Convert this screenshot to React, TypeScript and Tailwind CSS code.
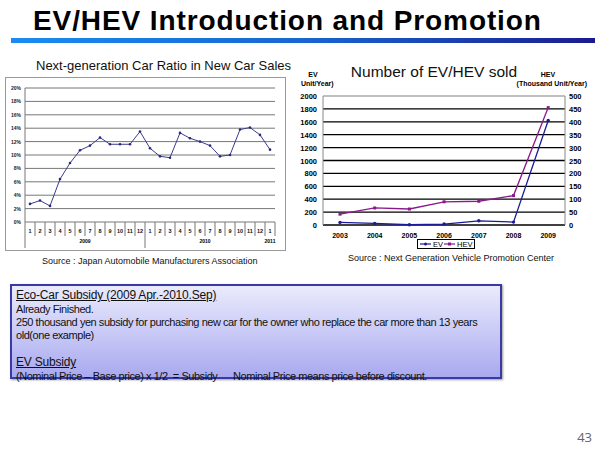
import React from "react";

const ratio = [2.7,3.2,2.4,6.4,8.8,10.7,11.4,12.6,11.6,11.6,11.6,13.5,11.0,9.8,9.6,13.3,12.5,12.0,11.4,9.8,10.0,13.8,14.1,13.0,10.8];
const months = [1,2,3,4,5,6,7,8,9,10,11,12,1,2,3,4,5,6,7,8,9,10,11,12,1];
const ev = [40,25,5,15,65,45,1620];
const hev = [42,66,62,90,92,114,455];
const years = [2003,2004,2005,2006,2007,2008,2009];

function LeftChart() {
  const y = (v: number) => 224 - (v / 20) * 134;
  const x = (i: number) => 30 + i * 10;
  const pts = ratio.map((v, i) => `${x(i)},${y(v)}`).join(" ");
  return (
    <svg width="290" height="180" viewBox="0 76 290 180" className="block">
      <rect x="5.5" y="79.5" width="280" height="173" fill="white" stroke="#999" />
      {Array.from({ length: 11 }, (_, k) => (
        <g key={k}>
          <line x1="25" x2="275" y1={y(k * 2)} y2={y(k * 2)} stroke="#777" strokeWidth="1" />
          <text x="21" y={y(k * 2) + 2} fontSize="5" fontWeight="bold" textAnchor="end" fill="#222">{k * 2}%</text>
        </g>
      ))}
      <line x1="25" x2="25" y1="90" y2="250" stroke="#777" />
      {months.map((m, i) => (
        <g key={i}>
          <line x1={25 + (i + 1) * 10} x2={25 + (i + 1) * 10} y1="224" y2={i === 11 ? 250 : 238} stroke="#777" />
          <text x={x(i)} y="235" fontSize="5.5" fontWeight="bold" textAnchor="middle" fill="#111">{m}</text>
        </g>
      ))}
      <text x="85" y="244.5" fontSize="5" fontWeight="bold" textAnchor="middle">2009</text>
      <text x="205" y="244.5" fontSize="5" fontWeight="bold" textAnchor="middle">2010</text>
      <text x="270" y="244.5" fontSize="5" fontWeight="bold" textAnchor="middle">2011</text>
      <polyline points={pts} fill="none" stroke="#3c3c8c" strokeWidth="1" />
      {ratio.map((v, i) => <circle key={i} cx={x(i)} cy={y(v)} r="1.3" fill="#2a2a7a" />)}
    </svg>
  );
}

function RightChart() {
  const y = (v: number) => 227 - (v / 2000) * 129;
  const x = (i: number) => 340 + i * 34.7;
  const evPts = ev.map((v, i) => `${x(i)},${y(v)}`).join(" ");
  const hevPts = hev.map((v, i) => `${x(i)},${y(v * 4)}`).join(" ");
  return (
    <svg width="300" height="194" viewBox="300 60 300 194" className="block">
      <text x="434" y="79" fontSize="15.5" textAnchor="middle" fill="#111">Number of EV/HEV sold</text>
      <text x="313" y="79" fontSize="7" fontWeight="bold" textAnchor="middle">EV</text>
      <text x="301" y="88" fontSize="7" fontWeight="bold">Unit/Year)</text>
      <text x="548" y="79" fontSize="7" fontWeight="bold" textAnchor="middle">HEV</text>
      <text x="587" y="88" fontSize="7" fontWeight="bold" textAnchor="end">(Thousand Unit/Year)</text>
      {Array.from({ length: 11 }, (_, k) => (
        <g key={k}>
          <line x1="323" x2="565" y1={y(k * 200)} y2={y(k * 200)} stroke={k === 10 ? "#aaa" : "#000"} strokeWidth="1.3" />
          <text x="317" y={y(k * 200) + 3} fontSize="7.5" fontWeight="bold" textAnchor="end">{k * 200}</text>
          <text x="569" y={y(k * 200) + 3} fontSize="7.5" fontWeight="bold">{k * 50}</text>
        </g>
      ))}
      <line x1="323" x2="323" y1="98" y2="227" stroke="#888" />
      <line x1="565" x2="565" y1="98" y2="227" stroke="#888" />
      {years.map((yr, i) => (
        <text key={yr} x={x(i)} y="240" fontSize="7" fontWeight="bold" textAnchor="middle">{yr}</text>
      ))}
      <polyline points={hevPts} fill="none" stroke="#8a1a8a" strokeWidth="1.3" />
      {hev.map((v, i) => <rect key={i} x={x(i) - 1.5} y={y(v * 4) - 1.5} width="3" height="3" fill="#8a1a8a" />)}
      <polyline points={evPts} fill="none" stroke="#1a1a9a" strokeWidth="1.3" />
      {ev.map((v, i) => <circle key={i} cx={x(i)} cy={y(v)} r="1.7" fill="#1a1a9a" />)}
      <rect x="417.5" y="241.5" width="57" height="9" fill="white" stroke="#000" />
      <line x1="420" x2="431" y1="246" y2="246" stroke="#1a1a9a" strokeWidth="1.2" />
      <circle cx="425.5" cy="246" r="1.5" fill="#1a1a9a" />
      <text x="433" y="249" fontSize="7.5">EV</text>
      <line x1="444" x2="455" y1="246" y2="246" stroke="#8a1a8a" strokeWidth="1.2" />
      <rect x="448" y="244.5" width="3" height="3" fill="#8a1a8a" />
      <text x="457" y="249" fontSize="7.5">HEV</text>
    </svg>
  );
}

export default function App() {
  return (
    <div className="w-[600px] h-[450px] bg-white flex flex-col overflow-hidden" style={{ fontFamily: '"Liberation Sans", Arial, sans-serif' }}>
      <div className="pl-[33px] pt-[5px] h-[38px] text-[28px] font-bold leading-[32px] text-black tracking-[0.9px] whitespace-nowrap">EV/HEV Introduction and Promotion</div>
      <div className="ml-[11px] w-[584px] h-[5px] bg-gradient-to-r from-[#1a8cf0] via-[#1866d0] to-[#1a1a90]"></div>
      <div className="flex mt-[15px] gap-[10px]">
        <div className="flex flex-col w-[290px]">
          <div className="pl-[36px] h-[16px] leading-[16px] text-[13px] text-[#111] whitespace-nowrap">Next-generation Car Ratio in New Car Sales</div>
          <LeftChart />
          <div className="pl-[42px] mt-[1px] leading-[12px] text-[9px] text-[#111] whitespace-nowrap">Source : Japan Automobile Manufacturers Association</div>
        </div>
        <div className="flex flex-col w-[300px]">
          <RightChart />
          <div className="pl-[48px] leading-[12px] text-[9px] text-[#111] whitespace-nowrap">Source : Next Generation Vehicle Promotion Center</div>
        </div>
      </div>
      <div className="ml-[10px] mt-[17px] w-[492px] h-[95px] border-2 border-[#3a3aa6] bg-gradient-to-b from-[#ebebfc] to-[#a9a9ef] px-[4px] pt-[2px] text-[11px] leading-[13px] text-[#111] shadow-[1px_1px_2px_rgba(0,0,0,0.4)] tracking-[-0.45px]">
        <div className="underline text-[12px] leading-[15px] tracking-[-0.2px]">Eco-Car Subsidy (2009 Apr.-2010.Sep)</div>
        <div>Already Finished.</div>
        <div>250 thousand yen subsidy for purchasing new car for the owner who replace the car more than 13 years old(one example)</div>
        <div className="h-[13px]"></div>
        <div className="underline text-[12px] leading-[15px] tracking-[-0.2px]">EV Subsidy</div>
        <div className="whitespace-pre">(Nominal Price – Base price) x 1/2  = Subsidy      Nominal Price means price before discount.</div>
      </div>
      <div className="flex justify-end pr-[8px] mt-auto pb-[3px] text-[13px] text-[#666]" style={{ fontFamily: '"Open Sans", sans-serif' }}>43</div>
    </div>
  );
}
